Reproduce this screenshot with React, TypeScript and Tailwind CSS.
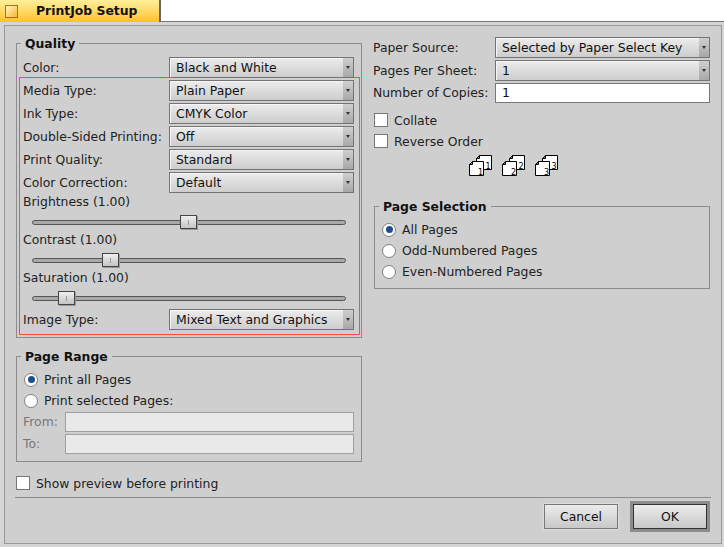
import type { ReactNode } from 'react';

const FONT = "font-['DejaVu_Sans',sans-serif]";

function Combo({ value, className = 'w-[185px]' }: { value: string; className?: string }) {
  return (
    <div className={`${className} h-[21px] flex border border-[#747474] bg-gradient-to-b from-[#ececec] to-[#cdcdcd] shadow-[inset_1px_1px_0_#f6f6f6]`}>
      <div className="flex-1 pl-[6px] leading-[19px] whitespace-nowrap overflow-hidden text-[#111]">{value}</div>
      <div className="w-[10px] flex items-center justify-center bg-gradient-to-b from-[#cfcfcf] to-[#a8a8a8]">
        <div className="w-0 h-0 border-x-[2.5px] border-x-transparent border-t-[3px] border-t-[#333]" />
      </div>
    </div>
  );
}

function ComboRow({ label, value }: { label: string; value: string }) {
  return (
    <div className="flex items-center justify-between h-[21px] mb-[2px]">
      <span className="whitespace-nowrap">{label}</span>
      <Combo value={value} />
    </div>
  );
}

function Slider({ label, pos }: { label: string; pos: number }) {
  return (
    <div className="h-[38px]">
      <div className="h-[18px] leading-[13px]">{label}</div>
      <div className="relative h-[20px] ml-[9px] mr-[8px]">
        <div className="absolute left-0 right-0 top-[7px] h-[5px] rounded-full border border-[#555] bg-[#a9a9a9]" />
        <div
          className="absolute top-[2px] w-[17px] h-[14px] flex items-center justify-center border border-[#444] bg-gradient-to-b from-[#f0f0f0] to-[#c4c4c4] shadow-[1px_1px_0_#999]"
          style={{ left: pos }}
        >
          <div className="w-px h-[5px] bg-[#999]" />
        </div>
      </div>
    </div>
  );
}

function Group({ title, className, children }: { title: string; className: string; children: ReactNode }) {
  return (
    <fieldset className={`border border-[#8c8c8c] min-w-0 ${className}`}>
      <legend className="ml-[4px] px-[4px] h-[14px] font-bold leading-[16px] text-[#111]">{title}</legend>
      {children}
    </fieldset>
  );
}

function Check({ label, className = '' }: { label: string; className?: string }) {
  return (
    <div className={`flex items-center h-[16px] ${className}`}>
      <div className="w-[14px] h-[14px] bg-white border border-[#777]" />
      <span className="ml-[6px] pt-[2px] whitespace-nowrap">{label}</span>
    </div>
  );
}

function Radio({ label, on }: { label: string; on?: boolean }) {
  return (
    <div className="flex items-center h-[21px]">
      <div className="w-[14px] h-[14px] rounded-full bg-white border border-[#808080] flex items-center justify-center">
        {on && <div className="w-[7px] h-[7px] rounded-full bg-[#1d4f8c]" />}
      </div>
      <span className="ml-[6px] whitespace-nowrap">{label}</span>
    </div>
  );
}

function Disabled({ label }: { label: string }) {
  return (
    <div className="flex items-center h-[20px] mb-[2px] -ml-[1px] text-[#777]">
      <span className="w-[42px]">{label}</span>
      <div className="flex-1 h-[20px] border border-[#a0a0a0] bg-[#e9e9e9]" />
    </div>
  );
}

function CollateIcon({ n }: { n: number }) {
  return (
    <svg width="23" height="21" viewBox="0 0 23 21" className="block">
      <path d="M7.5 3.5l3-3h12v14h-15z" fill="#fff" stroke="#000" />
      <path d="M0.5 9.5l3-3h11v14h-14z" fill="#fff" stroke="#000" />
      <path d="M0.5 9.5h3v-3z" fill="#888" stroke="#000" />
      <path d="M7.5 3.5h3v-3z" fill="#888" stroke="#000" />
      <text x="16.5" y="13.5" fontSize="8" fontFamily="DejaVu Sans" fill="#000">{n}</text>
      <text x="9" y="19.5" fontSize="8" fontFamily="DejaVu Sans" fill="#000">{n}</text>
    </svg>
  );
}

export default function App() {
  return (
    <div className={`${FONT} w-[724px] h-[547px] overflow-hidden text-[12.4px] leading-[16px] text-[#222] bg-white flex flex-col`}>
      {/* Tab */}
      <div className="h-[22px] flex shrink-0 border-b border-[#777]">
        <div className="w-[161px] h-[22px] flex items-center pl-[5px] border-r-2 border-[#666] bg-gradient-to-b from-[#ffee99] to-[#ffc400]">
          <div className="w-[13px] h-[13px] border border-[#9a7a14] bg-gradient-to-br from-[#fff4c0] to-[#f5b800]" />
          <span className="ml-[18px] font-bold text-[#111]">PrintJob Setup</span>
        </div>
      </div>

      {/* Window body */}
      <div className="flex-1 min-h-0 bg-[#d6d6d6] pt-[3px] pl-[4px] pr-[2px] pb-[3px]">
        <div className="h-full bg-[#cfcfcf] pt-[10px] pl-[11px] pr-[10px] border border-[#999]">
          <div className="flex gap-[12px]">
            {/* Left column */}
            <div className="w-[346px] shrink-0">
              <Group title="Quality" className="h-[302px]">
                <div className="flex items-center justify-between h-[21px] mt-[7px] pl-[6px] pr-[7px]">
                  <span>Color:</span>
                  <Combo value="Black and White" />
                </div>
                <div className="border border-[#ff4d3a] ml-[2px] mr-[1px] -mt-[1px] pl-[3px] pr-[5px] pt-[2px] h-[258px]">
                  <ComboRow label="Media Type:" value="Plain Paper" />
                  <ComboRow label="Ink Type:" value="CMYK Color" />
                  <ComboRow label="Double-Sided Printing:" value="Off" />
                  <ComboRow label="Print Quality:" value="Standard" />
                  <ComboRow label="Color Correction:" value="Default" />
                  <Slider label="Brightness (1.00)" pos={148} />
                  <Slider label="Contrast (1.00)" pos={70} />
                  <Slider label="Saturation (1.00)" pos={26} />
                  <ComboRow label="Image Type:" value="Mixed Text and Graphics" />
                </div>
              </Group>

              <Group title="Page Range" className="h-[113px] mt-[11px]">
                <div className="pt-[6px] px-[7px]">
                  <Radio label="Print all Pages" on />
                  <Radio label="Print selected Pages:" />
                  <div className="mt-[1px]">
                    <Disabled label="From:" />
                    <Disabled label="To:" />
                  </div>
                </div>
              </Group>

              <Check label="Show preview before printing" className="mt-[13px]" />
            </div>

            {/* Right column */}
            <div className="w-[336px] shrink-0 mt-[1px]">
              <div className="flex items-center h-[21px] mb-[2px]">
                <span className="w-[122px] -ml-[1px] whitespace-nowrap">Paper Source:</span>
                <Combo value="Selected by Paper Select Key" className="flex-1" />
              </div>
              <div className="flex items-center h-[21px] mb-[2px]">
                <span className="w-[122px] -ml-[1px] whitespace-nowrap">Pages Per Sheet:</span>
                <Combo value="1" className="flex-1" />
              </div>
              <div className="flex items-center h-[20px]">
                <span className="w-[122px] -ml-[1px] whitespace-nowrap">Number of Copies:</span>
                <div className="flex-1 h-[20px] border border-[#777] bg-white pl-[6px] leading-[18px] text-[#111]">1</div>
              </div>
              <Check label="Collate" className="mt-[9px]" />
              <Check label="Reverse Order" className="mt-[5px]" />
              <div className="flex gap-[10px] ml-[95px] mt-[6px]">
                <CollateIcon n={1} />
                <CollateIcon n={2} />
                <CollateIcon n={3} />
              </div>
              <Group title="Page Selection" className="h-[90px] mt-[23px]">
                <div className="pt-[6px] pl-[7px]">
                  <Radio label="All Pages" on />
                  <Radio label="Odd-Numbered Pages" />
                  <Radio label="Even-Numbered Pages" />
                </div>
              </Group>
            </div>
          </div>

          {/* Footer */}
          <div className="mt-[6px] -ml-[1px] border-t border-[#8c8c8c] flex justify-end gap-[15px] pt-[6px] pr-[4px]">
            <button className="w-[74px] h-[25px] border border-[#777] bg-gradient-to-b from-[#ececec] to-[#c8c8c8] shadow-[0_0_0_1px_#dcdcdc] text-[#111]">Cancel</button>
            <button className="w-[74px] h-[25px] border border-[#333] bg-gradient-to-b from-[#ececec] to-[#c8c8c8] shadow-[0_0_0_3px_#8c8c8c] text-[#111]">OK</button>
          </div>
        </div>
      </div>
    </div>
  );
}
